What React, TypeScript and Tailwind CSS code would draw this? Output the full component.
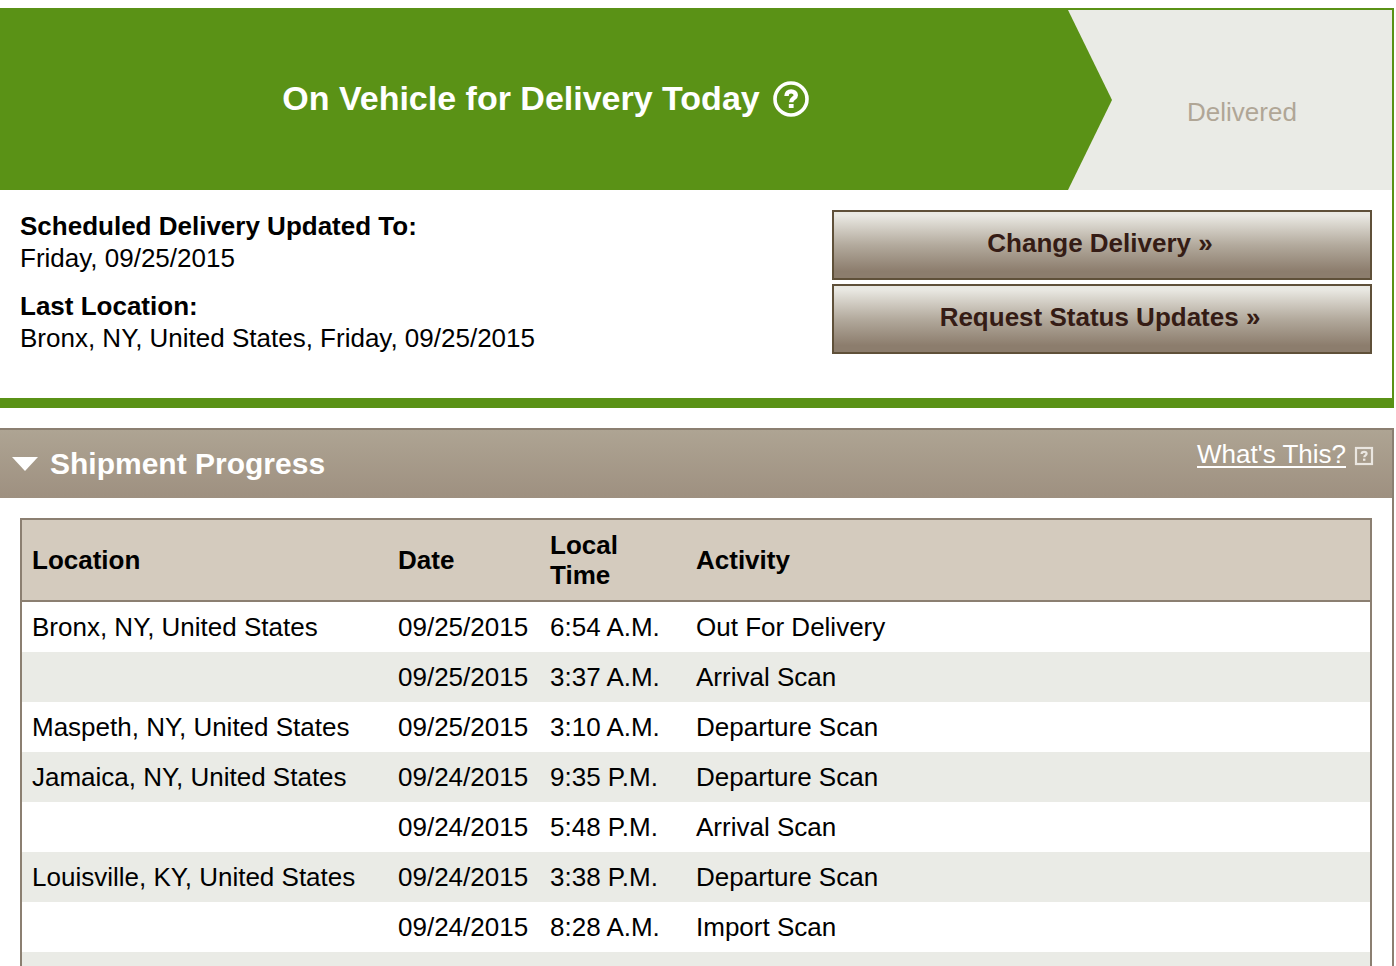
interface Scan {
  location: string;
  date: string;
  time: string;
  activity: string;
}

const scans: Scan[] = [
  { location: "Bronx, NY, United States", date: "09/25/2015", time: "6:54 A.M.", activity: "Out For Delivery" },
  { location: "", date: "09/25/2015", time: "3:37 A.M.", activity: "Arrival Scan" },
  { location: "Maspeth, NY, United States", date: "09/25/2015", time: "3:10 A.M.", activity: "Departure Scan" },
  { location: "Jamaica, NY, United States", date: "09/24/2015", time: "9:35 P.M.", activity: "Departure Scan" },
  { location: "", date: "09/24/2015", time: "5:48 P.M.", activity: "Arrival Scan" },
  { location: "Louisville, KY, United States", date: "09/24/2015", time: "3:38 P.M.", activity: "Departure Scan" },
  { location: "", date: "09/24/2015", time: "8:28 A.M.", activity: "Import Scan" },
  { location: "", date: "", time: "", activity: "" },
];

const columns = [
  { title: "Location", className: "w-[366px]" },
  { title: "Date", className: "w-[152px]" },
  { title: "Local Time", className: "w-[146px] pr-10" },
  { title: "Activity", className: "" },
];

function ActionButton({ label }: { label: string }) {
  return (
    <button
      type="button"
      className="h-[70px] w-full border-2 border-[#5f5039] bg-linear-to-b from-[#eae9e3] from-5% via-[#b3aa9d] via-50% to-[#8c7d6d] to-90% pr-1 pb-1 font-bold text-[#351c15]"
    >
      {label}
    </button>
  );
}

function StatusBanner() {
  return (
    <div className="flex h-[180px] bg-[#eaebe6]">
      <div className="flex flex-1">
        <div className="flex flex-1 items-center justify-center gap-3 bg-[#5a9216] pb-1 pl-6 text-white">
          <h1 className="text-[34px] leading-10 font-bold">On Vehicle for Delivery Today</h1>
          <button type="button" aria-label="Status help">
            <svg className="size-[38px]" viewBox="0 0 38 38" fill="none">
              <circle cx="19" cy="20" r="16" stroke="currentColor" strokeWidth="3.6" />
              <path d="M14.5 17c0-3.1 1.8-4.6 4.6-4.6 2.8 0 4.7 1.5 4.7 3.8 0 3.2-4.6 3.2-4.6 7" stroke="currentColor" strokeWidth="4.4" />
              <rect x="16.8" y="25" width="4.8" height="4" fill="currentColor" />
            </svg>
          </button>
        </div>
        {/* arrow tip */}
        <svg className="h-full w-11" viewBox="0 0 44 180" preserveAspectRatio="none">
          <path d="M0 0L44 90L0 180Z" fill="#5a9216" />
        </svg>
      </div>
      <div className="flex w-[280px] items-center justify-center pt-6 pr-5 text-[#b0a696]">Delivered</div>
    </div>
  );
}

function ShipmentTable() {
  return (
    <table className="w-full border-separate border-spacing-0 border-2 border-[#8b7f71] text-left">
      <thead>
        <tr className="h-[82px] bg-[#d4cbbe] leading-[30px]">
          {columns.map((col) => (
            <th key={col.title} className={`border-b-2 border-[#8b7f71] pl-[10px] ${col.className}`}>
              {col.title}
            </th>
          ))}
        </tr>
      </thead>
      <tbody>
        {scans.map((scan, i) => (
          <tr key={i} className="h-[50px] whitespace-nowrap even:bg-[#eaebe6]">
            <td className="pl-[10px]">{scan.location}</td>
            <td className="pl-[10px]">{scan.date}</td>
            <td className="pl-[10px]">{scan.time}</td>
            <td className="pl-[10px]">{scan.activity}</td>
          </tr>
        ))}
      </tbody>
    </table>
  );
}

export default function App() {
  return (
    <main className="h-screen overflow-hidden bg-white pt-2 pr-[2px] font-['Liberation_Sans',Arial,sans-serif] text-[26px] leading-8 text-black">
      <section className="border-t-2 border-r-2 border-b-[10px] border-[#5a9216]">
        <StatusBanner />
        <div className="flex justify-between px-5 pt-5 pb-11">
          <dl>
            <dt className="font-bold">Scheduled Delivery Updated To:</dt>
            <dd className="mb-4">Friday, 09/25/2015</dd>
            <dt className="font-bold">Last Location:</dt>
            <dd>Bronx, NY, United States, Friday, 09/25/2015</dd>
          </dl>
          <div className="flex w-[540px] flex-col gap-1">
            <ActionButton label="Change Delivery »" />
            <ActionButton label="Request Status Updates »" />
          </div>
        </div>
      </section>

      <section className="mt-5 border-t-2 border-r-2 border-[#8b7f71]">
        <div className="flex h-[68px] justify-between bg-linear-to-b from-[#aea493] to-[#9e9080] pr-[18px] pl-3 text-white">
          <button type="button" className="flex items-center gap-3" aria-expanded="true">
            <svg className="h-4 w-[26px]" viewBox="0 0 26 16">
              <path d="M0 1H26L13 15Z" fill="#fff" />
            </svg>
            <span className="text-[30px] font-bold">Shipment Progress</span>
          </button>
          <a href="#help" className="flex items-center gap-2 self-start pt-2">
            <span className="underline decoration-2 underline-offset-3">What&apos;s This?</span>
            <svg className="mt-1 size-5" viewBox="0 0 20 20" fill="none" stroke="#eae6e0">
              <rect x="2" y="2" width="16" height="16" strokeWidth="2.2" />
              <path d="M7.6 8c0-1.5 1-2.2 2.5-2.2s2.5.8 2.5 1.9c0 1.7-2.3 1.7-2.3 3.6" strokeWidth="2.2" />
              <path d="M10.2 12.6v2.2" strokeWidth="2.4" />
            </svg>
          </a>
        </div>
        <div className="p-5">
          <ShipmentTable />
        </div>
      </section>
    </main>
  );
}
